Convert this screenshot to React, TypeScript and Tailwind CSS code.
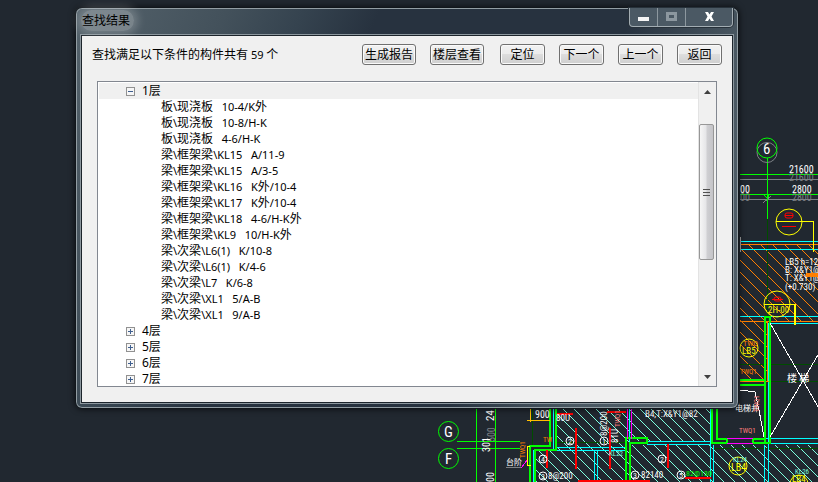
import React, { useState } from 'react';

interface Floor {
  name: string;
  items: string[];
}

interface LabelProps {
  x: number;
  y: number;
  size?: number;
  color?: string;
  vertical?: boolean;
  children: React.ReactNode;
}

const floors: Floor[] = [
  {
    name: '1层',
    items: [
      '板\\现浇板   10-4/K外',
      '板\\现浇板   10-8/H-K',
      '板\\现浇板   4-6/H-K',
      '梁\\框架梁\\KL15   A/11-9',
      '梁\\框架梁\\KL15   A/3-5',
      '梁\\框架梁\\KL16   K外/10-4',
      '梁\\框架梁\\KL17   K外/10-4',
      '梁\\框架梁\\KL18   4-6/H-K外',
      '梁\\框架梁\\KL9   10/H-K外',
      '梁\\次梁\\L6(1)   K/10-8',
      '梁\\次梁\\L6(1)   K/4-6',
      '梁\\次梁\\L7   K/6-8',
      '梁\\次梁\\XL1   5/A-B',
      '梁\\次梁\\XL1   9/A-B',
    ],
  },
  { name: '4层', items: [] },
  { name: '5层', items: [] },
  { name: '6层', items: [] },
  { name: '7层', items: [] },
];

const actions = ['定位', '下一个', '上一个', '返回'];

const buttonClass =
  'h-[21px] rounded-[3px] border border-[#707070] bg-[linear-gradient(#f2f2f2_0%,#ebebeb_49%,#dddddd_50%,#cfcfcf_100%)] pt-px text-center leading-[18px] whitespace-nowrap shadow-[inset_0_0_0_1px_#fafafa]';

// Latin letters and digits are set one size below the Chinese text
function MixedText({ text }: { text: string }) {
  return (
    <>
      {text.split(/([\x20-\x7e]+)/).map((part, i) =>
        i % 2 === 1 ? <span key={i} className="text-[11px]">{part}</span> : part
      )}
    </>
  );
}

function Label({ x, y, size = 9, color = '#ffffff', vertical, children }: LabelProps) {
  return (
    <text x={x} y={y} fontSize={size} fill={color} transform={vertical ? `rotate(-90 ${x} ${y})` : undefined}>
      {children}
    </text>
  );
}

function Mark({ x, y, n }: { x: number; y: number; n: string }) {
  return (
    <g>
      <circle cx={x} cy={y} r="4" fill="none" stroke="#fff" />
      <text x={x} y={y + 3} fontSize="8" fill="#fff" textAnchor="middle">{n}</text>
    </g>
  );
}

// Floor plan behind the dialog
function FloorPlan() {
  return (
    <svg
      className="absolute inset-0 h-full w-full font-['Roboto_Condensed','Liberation_Sans_Narrow','Liberation_Sans','Noto_Sans_CJK_SC',sans-serif]"
      viewBox="0 0 818 482"
      preserveAspectRatio="xMidYMid slice"
      fill="none"
      aria-hidden="true"
    >
      <defs>
        <pattern id="orangeHatch" width="12" height="12" patternUnits="userSpaceOnUse">
          <path d="M0 0L12 12M-1 11L1 13M11 -1L13 1" stroke="#ff7f00" />
        </pattern>
        <pattern id="cyanHatch" width="11" height="11" patternUnits="userSpaceOnUse">
          <path d="M0 0L11 11M-1 10L1 12M10 -1L12 1" stroke="#7fffdf" />
        </pattern>
      </defs>

      <path d="M740 244H818V321H769V381H740Z" fill="url(#orangeHatch)" />
      <path d="M555 400H711V441H630V482H536V450H555ZM630 445H818V482H630Z" fill="url(#cyanHatch)" />

      <g shapeRendering="crispEdges">
        <path d="M767.5 219V345M740 364.5H818M740 381.5H818M555 442.5H625M714 448.5H818M532.5 409V447" stroke="#004c00" />
        <path d="M740 179.5H818M740 199.5H818M763 203L771 196" stroke="#7c8085" />
        <path d="M740 174.5H818M740 194.5H818M476.5 406V482M495.5 406V482M457 441.5H520M457 448.5H520M491 441.5H500M764 194.5L767 198L770 194" stroke="#00ff00" />
        <path d="M767 158V219" stroke="#00ff00" />
        <path d="M740 241.5H818M740 249.5H818M740 316.5H818M770 323.5H818M740 438.5H818M740 443.5H818M647 441.5H711M647 444.5H711M555 447.5H625M533 450.5H625M594.5 450V482M597.5 450V482M710.5 400V482M713.5 445V482M764.5 445V482M768.5 323V482M553.5 400V450M533.5 450V482M626.5 441V482M629.5 409V482" stroke="#00ffff" />
        <path d="M740 244.5H818M740 321.5H818M740 381.5H769M767.5 321V381" stroke="#ff7f00" />
        <path d="M740.5 237V252" stroke="#a8a8a8" />
        <path d="M764.5 444V317H769.5V444M716.5 384V440M711.5 400V443H727V439H716M753 439V443H769M753 439H764M740 379.5H764M740 384.5H764M549.5 400V446H530V482M555.5 400V450H535V482M625.5 482V438H647V443H630V482" stroke="#00ff00" strokeWidth="2" />
        <path d="M727 438.5H753M727 443.5H753M627.5 400V439M631.5 400V439M521 468L528 459" stroke="#ff00ff" />
        <path d="M557 414H573M576 428V469M610 428V469M607 412H626M578 481H650M668 444V468M547 450V468M685 478H711" stroke="#ff0000" strokeWidth="2" />
        <path d="M550 420.5H527M530.5 409V422" stroke="#ffbf00" />
        <path d="M527 446.5H530M527.5 446V465H531M789 221.5H813.5V252M776 221.5H790M764 304.5H794" stroke="#ffff00" />
        <path d="M794.5 304V325" stroke="#ffff00" strokeWidth="2" />
        <path d="M782 226.5H796" stroke="#ff0000" />
        <path d="M770 323L836 438M770 437L836 324M740 390L755 392L759 410L764 437" stroke="#ffffff" />
        <path d="M506 467.5H521" stroke="#7c8085" />
      </g>
      <g stroke="#ff0000">
        <rect x="785" y="213" width="8" height="5" rx="2" />
        <path d="M785 215.500H793" />
        <rect x="774" y="297" width="7" height="4" rx="2" />
        <path d="M772 299.500H783" />
      </g>

      <circle cx="767" cy="152.500" r="10" stroke="#7c8085" />
      <g stroke="#00ff00">
        <circle cx="767" cy="148" r="10" />
        <circle cx="448.500" cy="431.500" r="10" />
        <circle cx="448.500" cy="458.500" r="10" />
      </g>
      <g stroke="#ffff00">
        <circle cx="789" cy="222" r="13" />
        <circle cx="777" cy="304" r="13" />
        <circle cx="749" cy="348" r="9" />
        <circle cx="738" cy="466" r="9" />
        <circle cx="799" cy="484" r="9" />
      </g>

      <Label x={789} y={181} size={10} color="#7c8085">21600</Label>
      <Label x={792} y={201} size={10} color="#7c8085">2800</Label>
      <Label x={740} y={201} size={10} color="#7c8085">00</Label>
      <Label x={789} y={173} size={10}>21600</Label>
      <Label x={792} y={193} size={10}>2800</Label>
      <Label x={740} y={193} size={10}>00</Label>
      <Label x={763} y={154} size={15}>6</Label>
      <Label x={785} y={265}>LB5 h=12</Label>
      <Label x={785} y={273}>B: X&amp;Y1@</Label>
      <Label x={785} y={281}>T: X&amp;Y1@</Label>
      <Label x={785} y={290}>(+0.730)</Label>
      <rect x="806" y="273" width="12" height="4" fill="#ff7f00" />
      <Label x={768} y={313} color="#ffff00">2H-00</Label>
      <Label x={742} y={354} color="#ffff00">LB5</Label>
      <Label x={743} y={346} size={8} color="#ff7f00">TWQ</Label>
      <Label x={740} y={374} size={7} color="#ff7f00">TWQ1</Label>
      <Label x={787} y={382} size={10}>楼 梯</Label>
      <Label x={735} y={411} size={8}>电梯井</Label>
      <Label x={759} y={412} size={7} color="#ff7f7f" vertical>TWQ1</Label>
      <Label x={739} y={433} size={7} color="#ff7f7f">TWQ1</Label>
      <Label x={733} y={462} size={7} color="#7fffdf">KL24</Label>
      <Label x={731} y={471} size={10} color="#ffff00">LB4</Label>
      <Label x={795} y={474} size={7} color="#7fffdf">KL26</Label>
      <Label x={792} y={482} color="#ffff00">LB4</Label>
      <Label x={444} y={437} size={15}>G</Label>
      <Label x={445} y={464} size={15}>F</Label>
      <Label x={495} y={442} size={10} color="#7c8085" vertical>500</Label>
      <Label x={494} y={421} size={11} vertical>24</Label>
      <Label x={490} y={452} size={10} vertical>301</Label>
      <Label x={494} y={482} size={10} vertical>00</Label>
      <Label x={535} y={418} size={10}>900</Label>
      <Label x={525} y={458} size={7} color="#ff7f00" vertical>TWQ1</Label>
      <Label x={543} y={442} size={7} color="#ff7f00">TW</Label>
      <Label x={506} y={465} size={8}>台阶</Label>
      <Label x={556} y={421}>80U</Label>
      <Label x={607} y={436} vertical>8@200</Label>
      <Label x={618} y={443} vertical>81U</Label>
      <Label x={620} y={427} size={7} color="#ff7f7f" vertical>TWQ1</Label>
      <Label x={645} y={417}>B4,T:X&amp;Y1@82</Label>
      <Label x={609} y={456} size={7} color="#7fffdf">KL22</Label>
      <Mark x={543} y={476} n="3" />
      <Label x={548} y={479}>8@200</Label>
      <Label x={641} y={478}>82140</Label>
      <Label x={686} y={476} size={8} color="#00ff00">82@130</Label>
      <Mark x={570} y={441} n="2" />
      <Mark x={604} y={441} n="1" />
      <Mark x={662} y={459} n="2" />
      <Mark x={543} y={459} n="4" />
      <Mark x={635} y={475} n="3" />
      <Mark x={681} y={475} n="5" />
    </svg>
  );
}

function TitleBar() {
  return (
    <header className="flex h-[27px] items-start justify-between">
      <h1 className="mt-[2px] rounded-full bg-white/25 pt-px pr-[4px] pl-px leading-[20px] shadow-[0_0_8px_4px_rgba(255,255,255,0.2)]">
        查找结果
      </h1>
      <div className="flex h-[19px] rounded-b-[4px] border border-t-0 border-[#a3adb3] bg-[#4b5964] shadow-[0_0_0_1px_#27313a]">
        <button type="button" aria-label="最小化" className="flex w-[28px] justify-center border-r border-[#8d989f]">
          <span className="mt-[9px] h-[4px] w-[11px] bg-[#f4f4f4]" />
        </button>
        <button type="button" aria-label="最大化" className="flex w-[28px] justify-center border-r border-[#8d989f]">
          <span className="mt-[4px] h-[9px] w-[11px] border-[3px] border-[#8c979f]" />
        </button>
        <button type="button" aria-label="关闭" className="flex w-[46px] justify-center">
          <svg className="mt-[4px]" width="11" height="9" viewBox="0 0 11 9">
            <path d="M1 0H4L5.500 2.500L7 0H10L7.500 4.500L10 9H7L5.500 6.500L4 9H1L3.500 4.500Z" fill="#fff" />
          </svg>
        </button>
      </div>
    </header>
  );
}

function ScrollBar() {
  return (
    <div className="flex w-[18px] flex-col border-l border-[#e3e3e3] bg-[#f0f0f0] pr-px">
      <button type="button" aria-label="向上滚动" className="flex h-[19px] items-center justify-center">
        <svg width="7" height="4" viewBox="0 0 7 4"><path d="M3.500 0L7 4H0Z" fill="#404040" /></svg>
      </button>
      <div className="flex flex-1 flex-col pt-[23px]">
        <div className="flex h-[136px] w-[15px] flex-col items-center justify-center gap-[2px] rounded-[2px] border border-[#979797] bg-[linear-gradient(90deg,#f6f6f6,#e6e6e8_45%,#cfcfd2_55%,#c4c4c8)]">
          <span className="h-px w-[7px] bg-[#505050]" />
          <span className="h-px w-[7px] bg-[#505050]" />
          <span className="h-px w-[7px] bg-[#505050]" />
        </div>
      </div>
      <button type="button" aria-label="向下滚动" className="flex h-[19px] items-center justify-center">
        <svg width="7" height="4" viewBox="0 0 7 4"><path d="M0 0H7L3.500 4Z" fill="#404040" /></svg>
      </button>
    </div>
  );
}

function App() {
  const [openFloor, setOpenFloor] = useState('1层');

  return (
    <main className="relative min-h-screen overflow-hidden bg-[#212830] pt-[7px] pr-[79px] pl-[75px] font-['Noto_Sans','Noto_Sans_CJK_SC',sans-serif] text-[12px] text-black">
      <FloorPlan />
      <section
        role="dialog"
        aria-label="查找结果"
        className="relative rounded-[7px] border border-[#11161b] bg-[linear-gradient(115deg,#55636c_0%,#43515b_18%,#35434f_27%,#27323f_36%,#27323f_66%,#4a5862_80%,#53616b_100%)] px-[5px] pb-[5px] shadow-[inset_0_0_0_1px_#929da3,0_0_6px_rgba(0,0,0,0.7)]"
      >
        <TitleBar />
        <div className="border border-[#1c242b] bg-[#f0f0f0] px-[15px] pt-[8px] pb-[15px] shadow-[0_0_0_1px_#8c979e]">
          <div className="-mx-[5px] flex h-[37px] items-start justify-between">
            <p className="pt-px leading-[20px] whitespace-nowrap">
              <MixedText text="查找满足以下条件的构件共有 59 个" />
            </p>
            <div className="flex gap-[16px]">
              <div className="flex gap-[14px]">
                <button type="button" className={`${buttonClass} w-[54px]`}>生成报告</button>
                <button type="button" className={`${buttonClass} w-[54px]`}>楼层查看</button>
              </div>
              <div className="flex gap-[14px]">
                {actions.map(action => (
                  <button key={action} type="button" className={`${buttonClass} w-[45px]`}>{action}</button>
                ))}
              </div>
            </div>
          </div>

          <div className="flex h-[306px] border border-[#828790] bg-white">
            <ul className="flex-1 overflow-hidden pt-px pl-px">
              {floors.map(floor => {
                const isOpen = floor.name === openFloor;
                return (
                  <li key={floor.name}>
                    <div className={`flex h-[16px] items-center gap-[7px] pl-[27px] ${isOpen ? 'bg-[#f0f0f0]' : ''}`}>
                      <button
                        type="button"
                        aria-label={floor.name}
                        aria-expanded={isOpen}
                        className="h-[9px] w-[9px] border border-[#919191] bg-[#f6f6f6]"
                        onClick={() => setOpenFloor(isOpen ? '' : floor.name)}
                      >
                        <svg width="7" height="7" viewBox="0 0 7 7" shapeRendering="crispEdges">
                          <path d={isOpen ? 'M1 3.500H6' : 'M1 3.500H6M3.500 1V6'} stroke="#3f5f8f" />
                        </svg>
                      </button>
                      <span className="leading-[16px]">{floor.name}</span>
                    </div>
                    {isOpen && (
                      <ul>
                        {floor.items.map((item, i) => (
                          <li key={i} className="h-[16px] pl-[62px] leading-[16px] whitespace-pre">
                            <MixedText text={item} />
                          </li>
                        ))}
                      </ul>
                    )}
                  </li>
                );
              })}
            </ul>
            <ScrollBar />
          </div>
        </div>
      </section>
    </main>
  );
}

export default App;
